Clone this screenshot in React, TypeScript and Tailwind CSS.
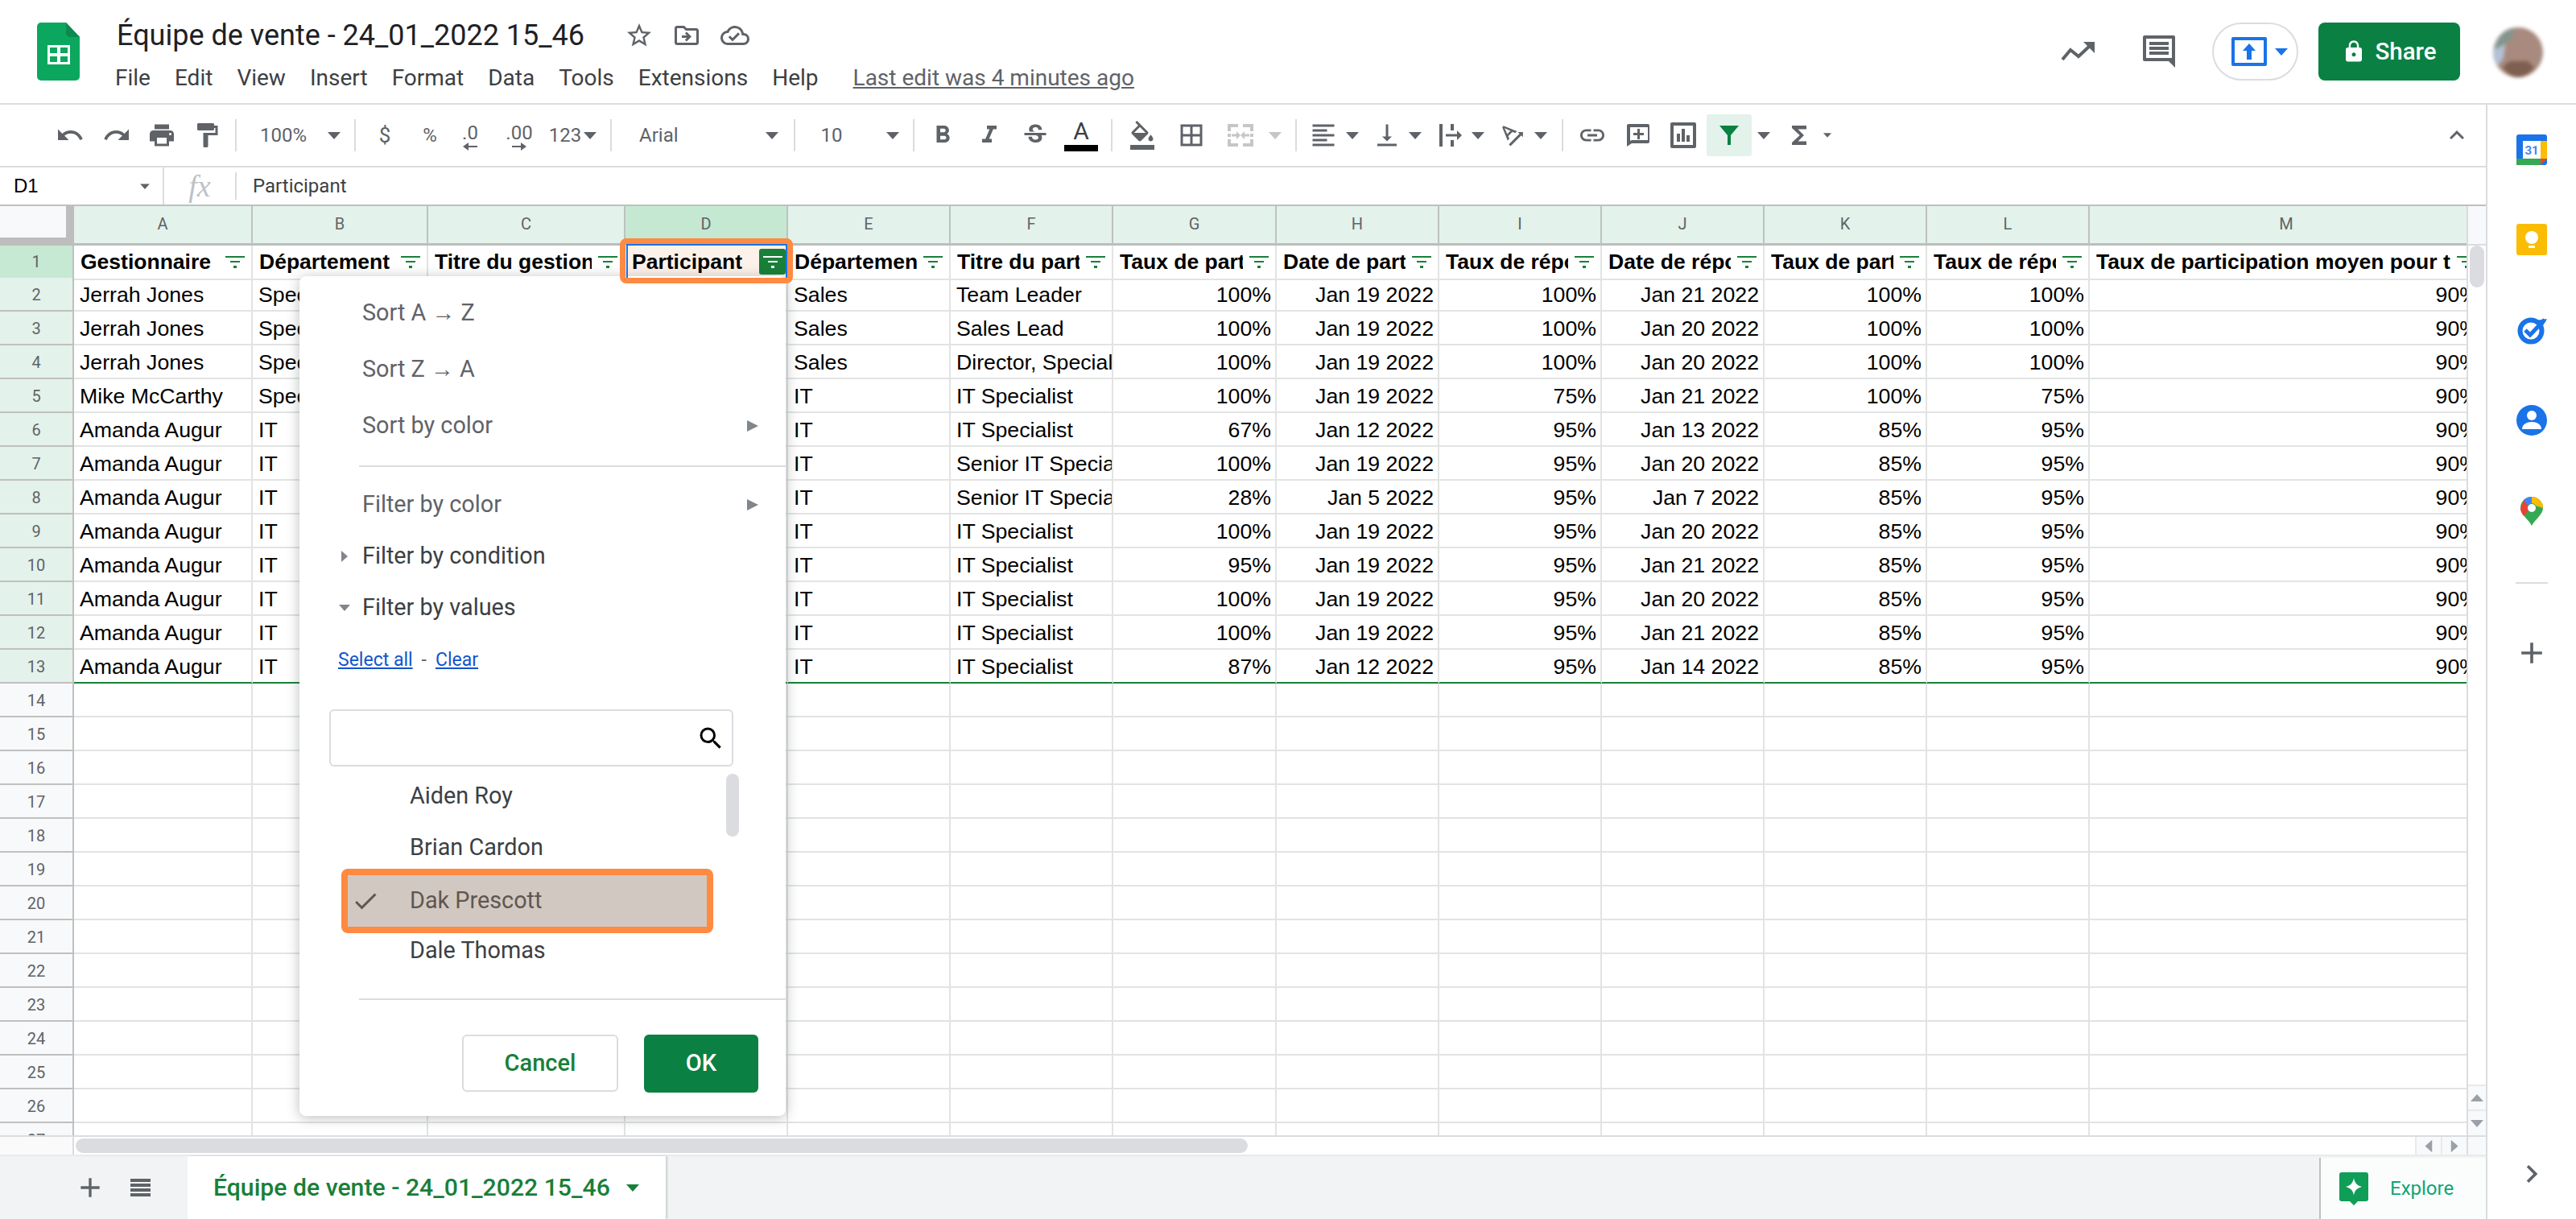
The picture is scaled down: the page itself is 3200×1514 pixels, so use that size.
import {
  MdUndo, MdRedo, MdPrint, MdFormatPaint, MdFormatBold, MdFormatItalic, MdStrikethroughS,
  MdFormatColorFill, MdBorderAll, MdFormatAlignLeft, MdVerticalAlignBottom,
  MdTextRotationAngleup, MdLink, MdFunctions,
  MdExpandLess, MdStarBorder, MdOutlineDriveFileMove,
  MdOutlineCloudDone, MdLock, MdAdd, MdSearch, MdCheck, MdChevronRight,
} from 'react-icons/md';

const COLS = 'grid grid-cols-[92px_222px_218px_245px_202px_202px_202px_203px_202px_202px_202px_202px_202px_490px]';
const ICON = 'shrink-0 text-[36px] text-[#5f6368]';
const SLOT = 'flex h-full shrink-0 items-center justify-center';
const ARIAL = "font-['Liberation_Sans',Arial,sans-serif]";

const LETTERS = ['A', 'B', 'C', 'D', 'E', 'F', 'G', 'H', 'I', 'J', 'K', 'L', 'M'];
const HEADERS = [
  'Gestionnaire', 'Département', 'Titre du gestionnaire', 'Participant', 'Département', 'Titre du participant',
  'Taux de participation', 'Date de participation', 'Taux de réponse', 'Date de réponse',
  'Taux de participation', 'Taux de réponse', 'Taux de participation moyen pour tous',
];

const s = 'Specialist';
const rows: string[][] = [
  ['Jerrah Jones', s, 'Sales', 'Team Leader', '100%', 'Jan 19 2022', '100%', 'Jan 21 2022', '100%', '100%'],
  ['Jerrah Jones', s, 'Sales', 'Sales Lead', '100%', 'Jan 19 2022', '100%', 'Jan 20 2022', '100%', '100%'],
  ['Jerrah Jones', s, 'Sales', 'Director, Specialist', '100%', 'Jan 19 2022', '100%', 'Jan 20 2022', '100%', '100%'],
  ['Mike McCarthy', s, 'IT', 'IT Specialist', '100%', 'Jan 19 2022', '75%', 'Jan 21 2022', '100%', '75%'],
  ['Amanda Augur', 'IT', 'IT', 'IT Specialist', '67%', 'Jan 12 2022', '95%', 'Jan 13 2022', '85%', '95%'],
  ['Amanda Augur', 'IT', 'IT', 'Senior IT Specialist', '100%', 'Jan 19 2022', '95%', 'Jan 20 2022', '85%', '95%'],
  ['Amanda Augur', 'IT', 'IT', 'Senior IT Specialist', '28%', 'Jan 5 2022', '95%', 'Jan 7 2022', '85%', '95%'],
  ['Amanda Augur', 'IT', 'IT', 'IT Specialist', '100%', 'Jan 19 2022', '95%', 'Jan 20 2022', '85%', '95%'],
  ['Amanda Augur', 'IT', 'IT', 'IT Specialist', '95%', 'Jan 19 2022', '95%', 'Jan 21 2022', '85%', '95%'],
  ['Amanda Augur', 'IT', 'IT', 'IT Specialist', '100%', 'Jan 19 2022', '95%', 'Jan 20 2022', '85%', '95%'],
  ['Amanda Augur', 'IT', 'IT', 'IT Specialist', '100%', 'Jan 19 2022', '95%', 'Jan 21 2022', '85%', '95%'],
  ['Amanda Augur', 'IT', 'IT', 'IT Specialist', '87%', 'Jan 12 2022', '95%', 'Jan 14 2022', '85%', '95%'],
];

function Caret({ className = 'text-[#5f6368]', small = false }: { className?: string; small?: boolean }) {
  return (
    <svg width={small ? 10 : 16} height={small ? 6 : 9} viewBox="0 0 16 9" className={`shrink-0 ${className}`}>
      <path d="M0 0h16L8 9z" fill="currentColor" />
    </svg>
  );
}

function Sep({ className = '' }: { className?: string }) {
  return (
    <div className={`${SLOT} ${className}`}>
      <div className="h-[40px] w-[2px] shrink-0 bg-[#dadce0]" />
    </div>
  );
}

function ColText({ children, className }: { children: React.ReactNode; className: string }) {
  return <div className={`${SLOT} ${className} whitespace-nowrap text-[24px] text-[#5f6368]`}>{children}</div>;
}

function FilterGlyph({ white = false }: { white?: boolean }) {
  const c = white ? 'text-white' : 'text-[#188038]';
  return (
    <svg width="24" height="15" viewBox="0 0 24 15" className={`shrink-0 ${c}`}>
      <path d="M0 0h24v2H0zM6 6h12v2H6zM10 12h4v3h-4z" fill="currentColor" />
    </svg>
  );
}

function SheetsLogo() {
  return (
    <svg width="53" height="72" viewBox="0 0 53 72" className="shrink-0">
      <path d="M5 0h31l17 18v49a5 5 0 0 1-5 5H5a5 5 0 0 1-5-5V5a5 5 0 0 1 5-5z" fill="#0ca75e" />
      <path d="M36 0l17 18H41a5 5 0 0 1-5-5z" fill="#0b8a4e" />
      <path d="M13 28h28v24H13zm3 3v7h9v-7zm13 0v7h9v-7zM16 42v7h9v-7zm13 0v7h9v-7z" fill="#fff" fillRule="evenodd" />
    </svg>
  );
}

function Header() {
  return (
    <header className="flex h-[130px] shrink-0 border-b-2 border-[#dadce0] pl-[46px]">
      <div className="mt-[28px]">
        <SheetsLogo />
      </div>
      <div className="ml-[46px] flex flex-col">
        <div className="mt-[26px] flex h-[36px] items-center">
          <span className="whitespace-nowrap text-[36px] text-[#202124]">Équipe de vente - 24_01_2022 15_46</span>
          <MdStarBorder className="ml-[50px] shrink-0 text-[36px] text-[#5f6368]" />
          <MdOutlineDriveFileMove className="ml-[23px] shrink-0 text-[36px] text-[#5f6368]" />
          <MdOutlineCloudDone className="ml-[24px] shrink-0 text-[36px] text-[#5f6368]" />
        </div>
        <nav className="-ml-[2px] mt-[17px] flex h-[36px] items-center gap-[30px] whitespace-nowrap text-[28px] text-[#3c4043]">
          {['File', 'Edit', 'View', 'Insert', 'Format', 'Data', 'Tools', 'Extensions', 'Help'].map((m) => (
            <span key={m}>{m}</span>
          ))}
          <span className="ml-[13px] text-[#5f6368] underline">Last edit was 4 minutes ago</span>
        </nav>
      </div>
      <div className="ml-auto flex h-[128px] items-start pr-[40px] pt-[28px]">
        <div className="flex h-[72px] items-center">
          <svg width="42" height="24" viewBox="0 0 42 24" className="shrink-0 text-[#5f6368]">
            <path d="M2 22l10-12 10 8 14-13" fill="none" stroke="currentColor" strokeWidth="4" />
            <path d="M28 0h14v14z" fill="currentColor" />
          </svg>
          <svg width="40" height="40" viewBox="0 0 40 40" className="ml-[60px] shrink-0 text-[#5f6368]">
            <path d="M2 0h36a2 2 0 0 1 2 2v38l-8-8H2a2 2 0 0 1-2-2V2a2 2 0 0 1 2-2zm2 4v24h32V4z" fill="currentColor" fillRule="evenodd" />
            <path d="M8 8h24v4H8zM8 14h24v4H8zM8 20h24v4H8z" fill="currentColor" />
          </svg>
        </div>
        <div className="ml-[46px] flex h-[72px] w-[107px] items-center rounded-[36px] border-2 border-[#dadce0] pl-[22px]">
          <div className="flex h-[36px] w-[44px] items-center justify-center rounded-[2px] border-[4px] border-[#1a73e8]">
            <svg width="16" height="20" viewBox="0 0 16 20" className="shrink-0 text-[#1a73e8]">
              <path d="M8 0l8 9h-5v11H5V9H0z" fill="currentColor" />
            </svg>
          </div>
          <Caret className="ml-[10px] text-[#1a73e8]" />
        </div>
        <div className="ml-[25px] flex h-[72px] w-[176px] items-center justify-center gap-[11px] rounded-[8px] bg-[#0a8043] text-[29.500px] font-medium text-white">
          <MdLock className="shrink-0 text-[30px]" />
          Share
        </div>
        <svg width="64" height="64" viewBox="0 0 64 64" className="ml-[40px] mt-[5px] shrink-0 blur-[2px]">
          <ellipse cx="32" cy="32" rx="31" ry="31" fill="#a88a7e" />
          <path d="M14 7A31 31 0 0 0 1 32c0 6 2 12 6 17l7-10 4-30z" fill="#b4c0d4" />
          <path d="M14 7c4-3 10-5 14-5l-4 14-12 8-9 4C4 20 8 12 14 7z" fill="#84958c" />
          <path d="M13 50c6 9 12 13 19 13s14-4 20-12l-8-8H22z" fill="#7f5f50" />
        </svg>
      </div>
    </header>
  );
}

function Toolbar() {
  return (
    <div className="flex h-[78px] shrink-0 border-b-2 border-[#dadce0] pl-[58px]">
      <div className={`${SLOT} w-[58px]`}><MdUndo className={ICON} /></div>
      <div className={`${SLOT} w-[58px]`}><MdRedo className={ICON} /></div>
      <div className={`${SLOT} w-[54px]`}><MdPrint className={ICON} /></div>
      <div className={`${SLOT} w-[58px]`}><MdFormatPaint className={ICON} /></div>
      <Sep className="w-[14px]" />
      <ColText className="w-[104px]">100%</ColText>
      <div className={`${SLOT} w-[22px]`}><Caret /></div>
      <Sep className="w-[30px]" />
      <ColText className="w-[44px] text-[26px]">$</ColText>
      <ColText className="w-[68px]">%</ColText>
      <div className={`${SLOT} w-[32px] flex-col pt-[4px]`}>
        <span className="text-[24px] leading-[24px] text-[#5f6368]">.0</span>
        <svg width="18" height="10" viewBox="0 0 18 10" className="shrink-0 text-[#5f6368]"><path d="M0 5l7-5v4h11v2H7v4z" fill="currentColor" /></svg>
      </div>
      <div className={`${SLOT} w-[90px] flex-col pt-[4px]`}>
        <span className="text-[24px] leading-[24px] text-[#5f6368]">.00</span>
        <svg width="18" height="10" viewBox="0 0 18 10" className="shrink-0 text-[#5f6368]"><path d="M18 5l-7-5v4H0v2h11v4z" fill="currentColor" /></svg>
      </div>
      <ColText className="w-[24px]">123</ColText>
      <div className={`${SLOT} w-[38px]`}><Caret /></div>
      <Sep className="w-[14px]" />
      <div className={`${SLOT} w-[182px] justify-start pl-[28px] text-[24px] text-[#5f6368]`}>Arial</div>
      <div className={`${SLOT} w-[22px]`}><Caret /></div>
      <Sep className="w-[34px]" />
      <ColText className="w-[58px]">10</ColText>
      <div className={`${SLOT} ml-[36px] w-[22px]`}><Caret /></div>
      <Sep className="w-[30px]" />
      <div className={`${SLOT} w-[42px]`}><MdFormatBold className={ICON} /></div>
      <div className={`${SLOT} w-[74px]`}><MdFormatItalic className={ICON} /></div>
      <div className={`${SLOT} w-[40px]`}><MdStrikethroughS className={ICON} /></div>
      <div className={`${SLOT} w-[74px] flex-col`}>
        <span className="text-[30px] leading-[30px] text-[#3c4043]">A</span>
        <div className="mt-[2px] h-[8px] w-[42px] bg-black" />
      </div>
      <div className={`${SLOT} w-[2px]`}><div className="h-[40px] w-[2px] bg-[#dadce0]" /></div>
      <div className={`${SLOT} w-[74px]`}><MdFormatColorFill className={ICON} /></div>
      <div className={`${SLOT} w-[48px]`}><MdBorderAll className={ICON} /></div>
      <div className={`${SLOT} w-[74px]`}>
        <svg width="32" height="28" viewBox="0 0 32 28" className="shrink-0 text-[#c4c7c5]">
          <path d="M0 0h13v4H4v5H0zM19 0h13v9h-4V4h-9zM0 12h4v4H0zM28 12h4v4h-4zM0 19h4v5h9v4H0zM28 19h4v9H19v-4h9z" fill="currentColor" />
          <path d="M5 12.500h6V9l5 5-5 5v-3.500H5zM27 12.500h-6V9l-5 5 5 5v-3.500h6z" fill="currentColor" />
        </svg>
      </div>
      <div className={`${SLOT} w-[12px]`}><Caret className="text-[#c4c7c5]" /></div>
      <Sep className="w-[40px]" />
      <div className={`${SLOT} w-[28px]`}><MdFormatAlignLeft className={ICON} /></div>
      <div className={`${SLOT} w-[44px]`}><Caret /></div>
      <div className={`${SLOT} w-[42px]`}><MdVerticalAlignBottom className={ICON} /></div>
      <div className={`${SLOT} w-[28px]`}><Caret /></div>
      <div className={`${SLOT} w-[60px]`}>
        <svg width="28" height="28" viewBox="0 0 28 28" className="shrink-0 text-[#5f6368]">
          <path d="M0 0h4v28H0zM14 0h4v8h-4zM14 20h4v8h-4zM8 12.500h14V8l6 6-6 6v-4.500H8z" fill="currentColor" />
        </svg>
      </div>
      <div className={`${SLOT} w-[8px]`}><Caret /></div>
      <div className={`${SLOT} ml-[20px] w-[38px]`}><MdTextRotationAngleup className={ICON} /></div>
      <div className={`${SLOT} w-[32px]`}><Caret /></div>
      <Sep className="w-[22px]" />
      <div className={`${SLOT} w-[52px]`}><MdLink className={ICON} /></div>
      <div className={`${SLOT} w-[62px]`}>
        <svg width="28" height="28" viewBox="0 0 28 28" className="shrink-0 text-[#5f6368]">
          <path d="M2 0h24a2 2 0 0 1 2 2v20a2 2 0 0 1-2 2H6l-6 4V2a2 2 0 0 1 2-2zm2 4v17l2-1h20V4z" fill="currentColor" fillRule="evenodd" />
          <path d="M13 6h3v5h5v3h-5v5h-3v-5H8v-3h5z" fill="currentColor" />
        </svg>
      </div>
      <div className={`${SLOT} w-[50px]`}>
        <svg width="32" height="32" viewBox="0 0 32 32" className="shrink-0 text-[#5f6368]">
          <path d="M2 0h28a2 2 0 0 1 2 2v28a2 2 0 0 1-2 2H2a2 2 0 0 1-2-2V2a2 2 0 0 1 2-2zm2 4v24h24V4z" fill="currentColor" fillRule="evenodd" />
          <path d="M8 14h4v10H8zM14 8h4v16h-4zM20 16h4v8h-4z" fill="currentColor" />
        </svg>
      </div>
      <div className={`${SLOT} ml-[4px] w-[56px]`}>
        <div className="flex h-[52px] w-[56px] items-center justify-center rounded-[3px] bg-[#e3f2ea]">
          <svg width="24" height="24" viewBox="0 0 24 24" className="shrink-0 text-[#0a8043]">
            <path d="M0 0h24l-10 12v12h-4V12z" fill="currentColor" />
          </svg>
        </div>
      </div>
      <div className={`${SLOT} w-[30px]`}><Caret /></div>
      <div className={`${SLOT} w-[58px]`}><MdFunctions className={ICON} /></div>
      <div className={`${SLOT} w-[12px]`}><Caret small /></div>
      <div className={`${SLOT} ml-auto mr-[18px] w-[36px]`}><MdExpandLess className="text-[44px] text-[#5f6368]" /></div>
    </div>
  );
}

function FormulaBar() {
  return (
    <div className="flex h-[48px] shrink-0 items-center border-b-2 border-[#c0c0c0] text-[24px] text-[#3c4043]">
      <div className="flex h-full w-[204px] shrink-0 items-center justify-between border-r-2 border-[#dadce0] pl-[17px] pr-[14px]">
        <span className={`${ARIAL} text-black`}>D1</span>
        <Caret className="scale-75 text-[#5f6368]" />
      </div>
      <div className="flex w-[88px] shrink-0 justify-center font-['Liberation_Serif',serif] text-[38px] italic leading-none text-[#bdc1c6]">fx</div>
      <div className="h-[34px] w-[2px] shrink-0 bg-[#dadce0]" />
      <span className="ml-[20px] text-[#3c4043]">Participant</span>
    </div>
  );
}

function ColumnHeader() {
  return (
    <div className={`${COLS} h-[49px] shrink-0`}>
      <div className="border-b-[10px] border-r-[10px] border-[#bdbdbd] bg-[#f8f9fa]" />
      {LETTERS.map((l) => (
        <div
          key={l}
          className={`flex items-center justify-center border-b-[3px] border-r-2 border-b-[#bdbdbd] border-r-[#bcc2c0] pb-[2px] text-[20px] text-[#5f6368] ${l === 'D' ? 'bg-[#c5e8d3]' : 'bg-[#e3f2ea]'}`}
        >
          {l}
        </div>
      ))}
    </div>
  );
}

function FilterHeaderRow() {
  return (
    <div className={`${COLS} h-[40px] shrink-0 ${ARIAL} text-[26.500px] font-bold text-black`}>
      <div className="flex items-center justify-center border-b-2 border-r-2 border-b-[#c0c0c0] border-r-[#c0c0c0] bg-[#c6e9d3] font-['Roboto',sans-serif] text-[20px] font-normal text-[#5f6368]">1</div>
      {HEADERS.map((h, i) => (
        <div key={i} className={`relative flex items-center border-b-2 border-r-2 border-[#e2e3e3] pl-[8px] ${i === 3 ? 'bg-[#fdf2ea]' : ''}`}>
          <span className="min-w-0 flex-1 overflow-hidden whitespace-nowrap pt-[1px]">{h}</span>
          <div className={`ml-[3px] flex h-[32px] w-[33px] shrink-0 items-center justify-center rounded-[3px] ${i === 3 ? 'mr-[1px] bg-[#188038]' : 'mr-[4px]'}`}>
            <FilterGlyph white={i === 3} />
          </div>
        </div>
      ))}
    </div>
  );
}

function DataRow({ n, cells }: { n: number; cells?: string[] }) {
  const line = n === 13 ? 'border-b-[#188038]' : 'border-b-[#e2e3e3]';
  const c = cells ?? [];
  const vals = [c[0], c[1], '', '', c[2], c[3], c[4], c[5], c[6], c[7], c[8], c[9], cells ? '90%' : ''];
  return (
    <div className={`${COLS} h-[42px] shrink-0 ${ARIAL} text-[26.700px] text-black`}>
      <div className={`flex items-center justify-center border-b-2 border-r-2 border-b-[#c0c0c0] border-r-[#c0c0c0] pt-[1px] font-['Roboto',sans-serif] text-[20px] text-[#5f6368] ${cells ? 'bg-[#e3f2ea]' : 'bg-[#f8f9fa]'}`}>
        {n}
      </div>
      {vals.map((v, i) => (
        <div
          key={i}
          className={`flex items-center overflow-hidden whitespace-nowrap border-b-2 border-r-2 border-r-[#e2e3e3] pl-[7px] pr-[5px] pt-[3px] ${line} ${i >= 6 ? 'justify-end' : ''}`}
        >
          {v}
        </div>
      ))}
    </div>
  );
}

function Grid() {
  const empty = Array.from({ length: 14 }, (_, i) => i + 14);
  return (
    <div className="flex min-h-0 flex-1">
      <div className="w-[3064px] shrink-0 overflow-hidden">
        <ColumnHeader />
        <FilterHeaderRow />
        {rows.map((r, i) => <DataRow key={i} n={i + 2} cells={r} />)}
        {empty.map((n) => <DataRow key={n} n={n} />)}
      </div>
      <div className="flex w-[24px] shrink-0 flex-col border-l-2 border-[#dadce0]">
        <div className="h-[49px] shrink-0 border-b-2 border-[#dadce0] bg-[#f8f9fa]" />
        <div className="mx-auto h-[52px] w-[18px] shrink-0 rounded-full bg-[#dadce0]" />
        <div className="mt-auto flex h-[33px] items-center justify-center border-y-2 border-[#e8eaed] bg-[#f8f9fa]">
          <Caret className="rotate-180 text-[#9aa0a6]" />
        </div>
        <div className="flex h-[30px] items-center justify-center bg-[#f8f9fa]">
          <Caret className="text-[#9aa0a6]" />
        </div>
      </div>
    </div>
  );
}

function HScroll() {
  return (
    <div className="flex h-[24px] shrink-0 border-t-2 border-[#dadce0]">
      <div className="w-[92px] shrink-0 border-r-2 border-[#dadce0] bg-[#fafafa]" />
      <div className="ml-[2px] mt-[2px] h-[18px] w-[1456px] shrink-0 rounded-full bg-[#dadce0]" />
      <div className="ml-auto flex h-full w-[32px] items-center justify-center border-l-2 border-[#e8eaed] bg-[#f8f9fa]">
        <Caret className="rotate-90 text-[#9aa0a6]" />
      </div>
      <div className="flex h-full w-[32px] items-center justify-center border-l-2 border-[#e8eaed] bg-[#f8f9fa]">
        <Caret className="-rotate-90 text-[#9aa0a6]" />
      </div>
      <div className="h-full w-[24px] border-l-2 border-[#dadce0] bg-[#f8f9fa]" />
    </div>
  );
}

function TabBar() {
  return (
    <div className="flex min-h-0 flex-1 border-t-2 border-[#e8eaed] bg-[#f1f3f4]">
      <div className="flex w-[233px] shrink-0 items-center">
        <MdAdd className="ml-[92px] shrink-0 text-[40px] text-[#5f6368]" />
        <svg width="25" height="22" viewBox="0 0 25 22" className="ml-[30px] shrink-0 text-[#5f6368]">
          <path d="M0 0h25v4H0zM0 6h25v4H0zM0 12h25v4H0zM0 18h25v4H0z" fill="currentColor" />
        </svg>
      </div>
      <div className="flex w-[594px] shrink-0 items-center bg-white pl-[32px] shadow-[2px_0_2px_rgba(60,64,67,0.2)]">
        <span className="whitespace-nowrap text-[30.200px] font-medium text-[#188038]">Équipe de vente - 24_01_2022 15_46</span>
        <Caret className="ml-[20px] text-[#188038]" />
      </div>
      <div className="ml-auto mt-[2px] flex w-[207px] shrink-0 items-center border-l-2 border-[#c0c0c0] bg-[#fbfdfc] pl-[23px]">
        <svg width="36" height="41" viewBox="0 0 36 41" className="shrink-0">
          <path d="M3 0h30a3 3 0 0 1 3 3v30a3 3 0 0 1-3 3h-10l-5 5-5-5H3a3 3 0 0 1-3-3V3a3 3 0 0 1 3-3z" fill="#0f9d58" />
          <path d="M18 7c1 6 4 9.500 10 11-6 1.500-9 4.500-10 10.500C17 22.500 14 19.500 8 18c6-1.500 9-5 10-11z" fill="#fff" />
        </svg>
        <span className="ml-[27px] text-[24px] text-[#0ca678]">Explore</span>
      </div>
    </div>
  );
}

function SidePanel() {
  return (
    <aside className="flex w-[112px] shrink-0 flex-col items-center border-l-2 border-[#dadce0] pt-[37px]">
      <svg width="38" height="38" viewBox="0 0 38 38" className="shrink-0">
        <rect width="38" height="38" rx="3" fill="#1a73e8" />
        <rect x="8" y="8" width="22" height="22" fill="#fff" />
        <rect x="30" y="8" width="8" height="22" fill="#fbbc04" />
        <rect y="30" width="30" height="8" fill="#34a853" />
        <path d="M30 30h8l-8 8z" fill="#ea4335" />
        <text x="19" y="25" textAnchor="middle" fontSize="15" fontWeight="700" fill="#4285f4" fontFamily="Roboto, sans-serif">31</text>
      </svg>
      <svg width="38" height="39" viewBox="0 0 38 39" className="mt-[73px] shrink-0">
        <rect width="38" height="39" rx="3" fill="#fbbc04" />
        <circle cx="19" cy="17" r="8" fill="#fff" />
        <rect x="15" y="27" width="8" height="3" fill="#fff" />
      </svg>
      <svg width="38" height="36" viewBox="0 0 38 36" className="mt-[76px] shrink-0">
        <circle cx="18" cy="18" r="13.500" fill="none" stroke="#1a73e8" strokeWidth="6" />
        <path d="M11 17l6 6L35 4" fill="none" stroke="#1a73e8" strokeWidth="5" />
        <path d="M24 5l8 8 6-10z" fill="#1a73e8" />
      </svg>
      <svg width="38" height="38" viewBox="0 0 38 38" className="mt-[74px] shrink-0">
        <circle cx="19" cy="19" r="19" fill="#1a73e8" />
        <circle cx="19" cy="13" r="6" fill="#fff" />
        <path d="M7 30c0-6 6-9 12-9s12 3 12 9z" fill="#fff" />
      </svg>
      <svg width="28" height="36" viewBox="0 0 28 36" className="mt-[76px] shrink-0">
        <path d="M14 0a14 14 0 0 1 14 14c0 8-10 14-14 22C10 28 0 22 0 14A14 14 0 0 1 14 0z" fill="#34a853" />
        <path d="M4 4a14 14 0 0 1 10-4v8a6 6 0 0 0-5 3z" fill="#4285f4" />
        <path d="M4 4L0 14c0 4 2 7 4 10l6-7a6 6 0 0 1-1-6z" fill="#ea4335" />
        <path d="M14 0a14 14 0 0 1 14 14l-9-3a6 6 0 0 0-5-3z" fill="#fbbc04" />
        <circle cx="14" cy="14" r="5" fill="#fff" />
      </svg>
      <div className="mt-[70px] h-[2px] w-[40px] shrink-0 bg-[#dadce0]" />
      <MdAdd className="mt-[64px] shrink-0 text-[44px] text-[#5f6368]" />
      <MdChevronRight className="mb-[34px] mt-auto shrink-0 text-[44px] text-[#5f6368]" />
    </aside>
  );
}

function MenuRow({ label, h, dark, arrow, twirl }: { label: string; h: string; dark?: boolean; arrow?: boolean; twirl?: 'right' | 'down' }) {
  return (
    <div className={`relative flex ${h} items-center pl-[78px] pr-[34px] ${dark ? 'text-[#3c4043]' : 'text-[#5f6368]'}`}>
      {twirl === 'right' && (
        <svg width="8" height="14" viewBox="0 0 8 14" className="absolute left-[52px] text-[#80868b]"><path d="M0 0l8 7-8 7z" fill="currentColor" /></svg>
      )}
      {twirl === 'down' && (
        <svg width="14" height="8" viewBox="0 0 14 8" className="absolute left-[49px] text-[#80868b]"><path d="M0 0h14L7 8z" fill="currentColor" /></svg>
      )}
      <span>{label}</span>
      {arrow && (
        <svg width="14" height="14" viewBox="0 0 14 14" className="ml-auto text-[#80868b]"><path d="M0 0l14 7-14 7z" fill="currentColor" /></svg>
      )}
    </div>
  );
}

function FilterMenu() {
  return (
    <div className="absolute left-[372px] top-[343px] z-10 flex h-[1043px] w-[604px] flex-col rounded-[8px] bg-white pt-[11px] text-[28.800px] shadow-[0_2px_16px_rgba(60,64,67,0.35)]">
      <MenuRow label="Sort A → Z" h="h-[70px]" />
      <MenuRow label="Sort Z → A" h="h-[70px]" />
      <MenuRow label="Sort by color" h="h-[70px]" arrow />
      <div className="ml-[74px] mt-[14px] h-[2px] bg-[#dadce0]" />
      <div className="h-[15px]" />
      <MenuRow label="Filter by color" h="h-[64px]" arrow />
      <MenuRow label="Filter by condition" h="h-[64px]" dark twirl="right" />
      <MenuRow label="Filter by values" h="h-[64px]" dark twirl="down" />
      <div className="flex h-[66px] items-center pl-[48px] text-[23px] text-[#5f6368]">
        <span className="text-[#1155cc] underline">Select all</span>
        <span className="mx-[11px]">-</span>
        <span className="text-[#1155cc] underline">Clear</span>
      </div>
      <div className="ml-[37px] mt-[28px] flex h-[71px] w-[502px] items-center justify-end rounded-[6px] border-2 border-[#dadce0] pr-[8px]">
        <MdSearch className="text-[36px] text-black" />
      </div>
      <div className="relative mt-[5px] h-[256px] text-[#3c4043]">
        <div className="flex h-[64px] items-center pl-[137px]">Aiden Roy</div>
        <div className="flex h-[64px] items-center pl-[137px]">Brian Cardon</div>
        <div className="flex h-[64px] items-center pl-[137px]">Dak Prescott</div>
        <div className="flex h-[64px] items-center pl-[137px]">Dale Thomas</div>
        <div className="absolute left-[530px] top-[4px] h-[78px] w-[16px] rounded-full bg-[#dadce0]" />
        <div className="absolute left-[52px] top-[122px] flex h-[80px] w-[462px] items-center rounded-[8px] border-[8px] border-[#ff8a42] bg-[#d2c8c2] pl-[77px] text-[#5f5750]">
          <MdCheck className="absolute left-[4px] text-[36px] text-[#5f5750]" />
          Dak Prescott
        </div>
      </div>
      <div className="ml-[74px] mt-[27px] h-[2px] shrink-0 bg-[#dadce0]" />
      <div className="mt-[43px] flex justify-end gap-[32px] pr-[34px] text-[29px] font-medium">
        <div className="flex h-[71px] w-[194px] items-center justify-center rounded-[6px] border-2 border-[#dadce0] bg-white text-[#188038]">Cancel</div>
        <div className="flex h-[72px] w-[142px] items-center justify-center rounded-[6px] bg-[#0a8043] text-white">OK</div>
      </div>
    </div>
  );
}

export default function App() {
  return (
    <div className="relative flex h-[1514px] w-[3200px] flex-col overflow-hidden bg-white font-['Roboto',sans-serif]">
      <Header />
      <div className="flex min-h-0 flex-1">
        <main className="flex w-[3088px] shrink-0 flex-col">
          <Toolbar />
          <FormulaBar />
          <Grid />
          <HScroll />
          <div className="flex h-[80px] shrink-0"><TabBar /></div>
        </main>
        <SidePanel />
      </div>
      <FilterMenu />
      {/* selected cell and the orange callout sit on top of the menu edge */}
      <div className="absolute left-[778px] top-[303px] z-20 h-[45px] w-[200px] border-2 border-[#1a73e8]" />
      <div className="absolute left-[770px] top-[296px] z-20 h-[56px] w-[215px] rounded-[8px] border-[7px] border-[#ff8a42]" />
    </div>
  );
}
